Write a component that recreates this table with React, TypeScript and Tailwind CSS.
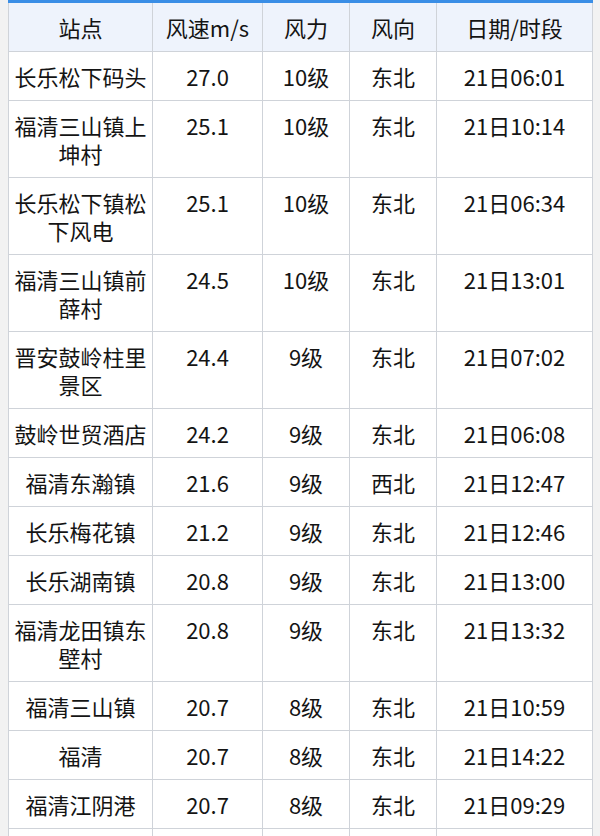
const rows: [string, string, string, string, string][] = [
  ['长乐松下码头', '27.0', '10级', '东北', '21日06:01'],
  ['福清三山镇上坤村', '25.1', '10级', '东北', '21日10:14'],
  ['长乐松下镇松下风电', '25.1', '10级', '东北', '21日06:34'],
  ['福清三山镇前薛村', '24.5', '10级', '东北', '21日13:01'],
  ['晋安鼓岭柱里景区', '24.4', '9级', '东北', '21日07:02'],
  ['鼓岭世贸酒店', '24.2', '9级', '东北', '21日06:08'],
  ['福清东瀚镇', '21.6', '9级', '西北', '21日12:47'],
  ['长乐梅花镇', '21.2', '9级', '东北', '21日12:46'],
  ['长乐湖南镇', '20.8', '9级', '东北', '21日13:00'],
  ['福清龙田镇东壁村', '20.8', '9级', '东北', '21日13:32'],
  ['福清三山镇', '20.7', '8级', '东北', '21日10:59'],
  ['福清', '20.7', '8级', '东北', '21日14:22'],
  ['福清江阴港', '20.7', '8级', '东北', '21日09:29'],
]

const headers = ['站点', '风速m/s', '风力', '风向', '日期/时段']

export default function App() {
  return (
    <div
      className="h-[836px] overflow-hidden bg-[#f2f2f2] px-2 text-[#141414]"
      style={{ fontFamily: '"Noto Sans CJK SC", "Noto Sans", sans-serif' }}
    >
      <table className="w-[584px] table-fixed border-collapse border-t-[3px] border-t-[#3a8ee6] bg-white text-center text-[22px] leading-[28px]">
        <colgroup>
          <col className="w-[144px]" />
          <col className="w-[110px]" />
          <col className="w-[87px]" />
          <col className="w-[87px]" />
          <col className="w-[156px]" />
        </colgroup>
        <thead>
          <tr className="bg-[#eef3fc]">
            {headers.map((h) => (
              <th
                key={h}
                className="border-x border-b border-[#cfd3d9] px-1 py-[10px] font-normal"
              >
                {h}
              </th>
            ))}
          </tr>
        </thead>
        <tbody>
          {rows.map((r) => (
            <tr key={r[0] + r[4]}>
              {r.map((c, i) => (
                <td
                  key={i}
                  className="border border-[#cfd3d9] px-1 py-[10px] align-top"
                >
                  {c}
                </td>
              ))}
            </tr>
          ))}
          {/* next row is cut off by the frame */}
          <tr>
            {headers.map((h) => (
              <td key={h} className="h-[49px] border border-[#cfd3d9]" />
            ))}
          </tr>
        </tbody>
      </table>
    </div>
  )
}
